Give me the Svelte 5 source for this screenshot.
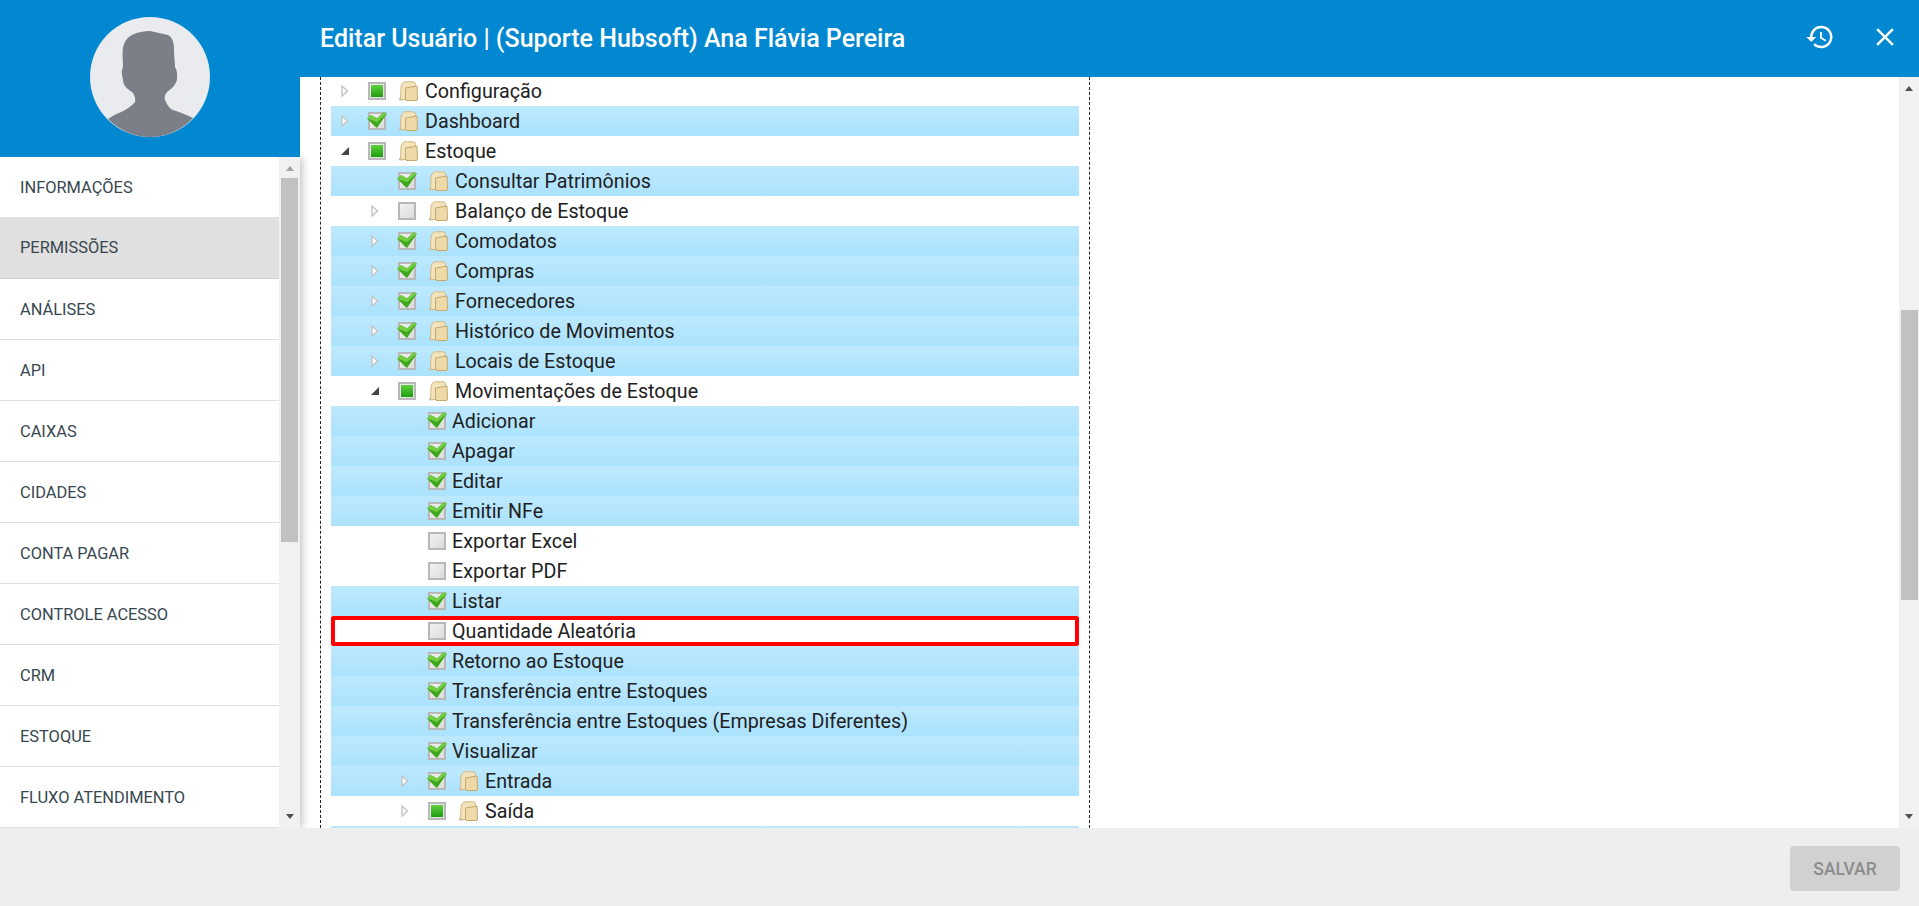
<script lang="ts">
	interface TreeRow {
		label: string;
		level: number;
		state: 'on' | 'off' | 'partial';
		arrow?: 'closed' | 'open';
		folder?: boolean;
		marked?: boolean;
	}

	const menu = [
		'Informações',
		'Permissões',
		'Análises',
		'API',
		'Caixas',
		'Cidades',
		'Conta Pagar',
		'Controle Acesso',
		'CRM',
		'Estoque',
		'Fluxo Atendimento'
	];

	const rows: TreeRow[] = [
		{ label: 'Configuração', level: 0, state: 'partial', arrow: 'closed', folder: true },
		{ label: 'Dashboard', level: 0, state: 'on', arrow: 'closed', folder: true },
		{ label: 'Estoque', level: 0, state: 'partial', arrow: 'open', folder: true },
		{ label: 'Consultar Patrimônios', level: 1, state: 'on', folder: true },
		{ label: 'Balanço de Estoque', level: 1, state: 'off', arrow: 'closed', folder: true },
		{ label: 'Comodatos', level: 1, state: 'on', arrow: 'closed', folder: true },
		{ label: 'Compras', level: 1, state: 'on', arrow: 'closed', folder: true },
		{ label: 'Fornecedores', level: 1, state: 'on', arrow: 'closed', folder: true },
		{ label: 'Histórico de Movimentos', level: 1, state: 'on', arrow: 'closed', folder: true },
		{ label: 'Locais de Estoque', level: 1, state: 'on', arrow: 'closed', folder: true },
		{ label: 'Movimentações de Estoque', level: 1, state: 'partial', arrow: 'open', folder: true },
		{ label: 'Adicionar', level: 2, state: 'on' },
		{ label: 'Apagar', level: 2, state: 'on' },
		{ label: 'Editar', level: 2, state: 'on' },
		{ label: 'Emitir NFe', level: 2, state: 'on' },
		{ label: 'Exportar Excel', level: 2, state: 'off' },
		{ label: 'Exportar PDF', level: 2, state: 'off' },
		{ label: 'Listar', level: 2, state: 'on' },
		{ label: 'Quantidade Aleatória', level: 2, state: 'off', marked: true },
		{ label: 'Retorno ao Estoque', level: 2, state: 'on' },
		{ label: 'Transferência entre Estoques', level: 2, state: 'on' },
		{ label: 'Transferência entre Estoques (Empresas Diferentes)', level: 2, state: 'on' },
		{ label: 'Visualizar', level: 2, state: 'on' },
		{ label: 'Entrada', level: 2, state: 'on', arrow: 'closed', folder: true },
		{ label: 'Saída', level: 2, state: 'partial', arrow: 'closed', folder: true },
		{ label: '', level: 2, state: 'on' }
	];
</script>

<div class="page">
	<div class="top">
		<div class="top-left">
			<div class="avatar">
				<svg viewBox="0 0 120 120" width="120" height="120">
					<circle cx="60" cy="60" r="60" fill="#e9ebef" />
					<path
						d="M18 102 C26 96 38 94 45 85 C46 81 44 77 42 75 C37 72 33 68 33 63 C32 58 31 54 33 50 C33 43 32 36 33 30 C35 23 38 20 42 18 C48 15 54 14 60 14 C66 15 72 17 78 18 C82 20 84 25 84 33 C84 40 85 45 85 50 C88 55 87 60 87 63 C85 69 81 72 77 75 C75 78 74 80 75 83 C77 88 80 92 83 93 C90 95 97 98 103 101 C92 113 76 120 60 120 C44 120 29 113 18 102 Z"
						fill="#7a7f88"
					/>
				</svg>
			</div>
		</div>
		<div class="top-bar">
			<h1>Editar Usuário | (Suporte Hubsoft) Ana Flávia Pereira</h1>
			<div class="top-actions">
				<svg viewBox="0 0 24 24" width="30" height="30" fill="#fff">
					<path d="M13 3a9 9 0 0 0-9 9H1l3.89 3.89.07.14L9 12H6a7 7 0 1 1 2.05 4.95l-1.42 1.42A9 9 0 1 0 13 3zm-1 5v5l4.28 2.54.72-1.21-3.5-2.08V8H12z" />
				</svg>
				<svg viewBox="0 0 24 24" width="30" height="30" fill="#fff">
					<path d="M19 6.41 17.59 5 12 10.59 6.41 5 5 6.41 10.59 12 5 17.59 6.41 19 12 13.41 17.59 19 19 17.59 13.41 12z" />
				</svg>
			</div>
		</div>
	</div>

	<div class="middle">
		<aside class="side">
			<ul>
				{#each menu as item, i}
					<li class:active={i === 1}>{item}</li>
				{/each}
			</ul>
			<div class="bar side-bar">
				<span class="up grey"></span>
				<div class="track"><div class="thumb side-thumb"></div></div>
				<span class="down"></span>
			</div>
		</aside>

		<main class="main">
			<div class="pane">
				<div class="tree">
					{#each rows as row}
						<div class="row" class:on={row.state === 'on'} class:marked={row.marked} style="padding-left: {row.level * 30}px">
							<span class="arrow">
								{#if row.arrow === 'closed'}
									<svg viewBox="0 0 8 12" width="8" height="12"><path d="M1 1 L6.5 6 L1 11 Z" fill="#fff" stroke="#c4c4c4" stroke-width="1.4" /></svg>
								{:else if row.arrow === 'open'}
									<svg viewBox="0 0 8 8" width="8" height="8"><path d="M8 0 V8 H0 Z" fill="#444" /></svg>
								{/if}
							</span>
							{#if row.label}
								<span class="check">
									{#if row.state === 'partial'}<span class="fill"></span>{/if}
									{#if row.state === 'on'}
										<svg class="tick" viewBox="0 0 20 17" width="20" height="17">
											<path d="M0 7.5 L4 4 L10 7.5 L16.5 1.5 L20 2.5 L10 17 L7.5 15 Z" fill="#3fa81d" />
											<path d="M0 7.5 L4 4 L10 7.5 L16.5 1.5 L20 2.5 L10 11 Z" fill="#72cf44" />
										</svg>
									{/if}
								</span>
								{#if row.folder}
									<svg class="folder" viewBox="0 0 20 20" width="20" height="20">
										<path d="M0.5 19 Q1.5 15.5 4 15.5 L5 19.5 L2 19.5 Z" fill="#bfc3ca" />
										<path d="M2.5 18.5 L3 6 Q4 0.8 7.5 0.8 L15 0.8 Q17.5 0.8 17.5 3.5 L17.5 7 L10 18.5 Z" fill="#f2e3bd" stroke="#d2ba84" stroke-width="1" />
										<path d="M7.5 7 L19 5 L19.5 18 Q19.5 19.5 18 19.5 L9 19.5 Q7.5 19.5 7.5 18 Z" fill="#eed9a8" stroke="#c5a86c" stroke-width="1" />
									</svg>
								{/if}
								<span class="label">{row.label}</span>
							{/if}
						</div>
					{/each}
				</div>
			</div>
			<div class="bar main-bar">
				<span class="up"></span>
				<div class="track"><div class="thumb main-thumb"></div></div>
				<span class="down"></span>
			</div>
		</main>
	</div>

	<footer>
		<button disabled>SALVAR</button>
	</footer>
</div>

<style>
	:global(body) {
		overflow: hidden;
		font-family: Roboto, "Liberation Sans", sans-serif;
	}

	.page {
		display: grid;
		grid-template-columns: 300px 1fr;
		grid-template-rows: 77px 751px 78px;
		height: 906px;
		width: 1919px;
	}

	.top {
		display: contents;
	}

	.top-left {
		grid-row: 1 / 3;
		grid-column: 1;
		height: 157px;
		background: #0288d1;
		display: flex;
		justify-content: center;
		padding-top: 17px;
		box-sizing: border-box;
	}

	.avatar {
		width: 120px;
		height: 120px;
	}

	.avatar svg {
		display: block;
	}

	.top-bar {
		grid-row: 1;
		grid-column: 2;
		background: #0288d1;
		display: flex;
		align-items: center;
		justify-content: space-between;
		padding: 0 19px 0 20px;
		box-sizing: border-box;
	}

	h1 {
		margin: 0;
		color: #fff;
		font-size: 25px;
		font-weight: 500;
	}

	.top-actions {
		display: flex;
		gap: 35px;
		margin-bottom: 3px;
	}

	.top-actions svg {
		display: block;
	}

	.middle {
		display: contents;
	}

	.side {
		grid-row: 2;
		grid-column: 1;
		margin-top: 80px;
		display: flex;
		height: 671px;
		background: #fff;
		box-shadow: 2px 0 8px rgba(0, 0, 0, 0.25);
		position: relative;
		z-index: 1;
		clip-path: inset(0 -12px 0 0);
	}

	ul {
		list-style: none;
		margin: 0;
		padding: 0;
		width: 279px;
		flex: none;
	}

	li {
		height: 61px;
		box-sizing: border-box;
		padding: 0 20px;
		display: flex;
		align-items: center;
		font-size: 16.4px;
		color: #37474f;
		text-transform: uppercase;
		border-bottom: 1px solid #e0e0e0;
	}

	li.active {
		background: #e0e0e0;
		margin-top: -1px;
		height: 62px;
		border-bottom-color: #d0d0d0;
	}

	.bar {
		flex: none;
		background: #f1f1f1;
		display: flex;
		flex-direction: column;
		align-items: center;
	}

	.side-bar {
		width: 21px;
	}

	.main-bar {
		width: 20px;
	}

	.track {
		flex: 1;
		width: 100%;
		box-sizing: border-box;
	}

	.side-bar .track {
		padding: 0 2px;
	}

	.main-bar .track {
		padding: 0 1px 0 2px;
	}

	.thumb {
		background: #c1c1c1;
	}

	.side-thumb {
		height: 364px;
	}

	.main-thumb {
		margin-top: 212px;
		height: 290px;
	}

	.up,
	.down {
		flex: none;
		width: 0;
		height: 0;
		border-left: 4.5px solid transparent;
		border-right: 4.5px solid transparent;
	}

	.up {
		margin: 9px 0 7px;
		border-bottom: 5px solid #505050;
	}

	.up.grey {
		border-bottom-color: #a3a3a3;
	}

	.down {
		margin: 7px 0 9px;
		border-top: 5px solid #505050;
	}

	.main {
		grid-row: 2;
		grid-column: 2;
		display: flex;
		background: #fff;
		overflow: hidden;
	}

	.pane {
		flex: 1;
		padding-left: 20px;
	}

	.tree {
		width: 770px;
		height: 751px;
		box-sizing: border-box;
		border-left: 1px dashed #222;
		border-right: 1px dashed #222;
		padding: 0 10px;
		overflow: hidden;
	}

	.row {
		height: 30px;
		display: flex;
		align-items: center;
		box-sizing: border-box;
		font-size: 19.7px;
		color: #212121;
		white-space: nowrap;
	}

	.row:first-child {
		margin-top: -1px;
	}

	.row.on {
		background: linear-gradient(#bde9ff, #abe2fd);
	}

	.row.marked {
		outline: 4px solid #f00;
		outline-offset: -4px;
		border-radius: 2px;
	}

	.arrow {
		width: 11px;
		margin-left: 8px;
		flex: none;
		display: flex;
		align-items: center;
		justify-content: center;
	}

	.check {
		position: relative;
		flex: none;
		width: 18px;
		height: 18px;
		margin-left: 18px;
		box-sizing: border-box;
		border: 2px solid #b8b8b8;
		background: linear-gradient(135deg, #f2f2f2, #dcdcdc);
	}

	.fill {
		position: absolute;
		inset: 1px;
		background: linear-gradient(#5fd03f, #1f9c10);
	}

	.tick {
		position: absolute;
		left: -3px;
		top: -3px;
	}

	.folder {
		flex: none;
		margin-left: 12px;
		margin-right: 1px;
	}

	.label {
		margin-left: 6px;
	}

	footer {
		grid-row: 3;
		grid-column: 1 / 3;
		background: #eee;
		display: flex;
		justify-content: flex-end;
		align-items: flex-start;
		padding: 18px 19px 0 0;
	}

	button {
		width: 110px;
		height: 45px;
		border: none;
		border-radius: 4px;
		background: #d1d1d1;
		color: #8c8c8c;
		font-family: Roboto, sans-serif;
		font-size: 17.5px;
		font-weight: 500;
	}
</style>
